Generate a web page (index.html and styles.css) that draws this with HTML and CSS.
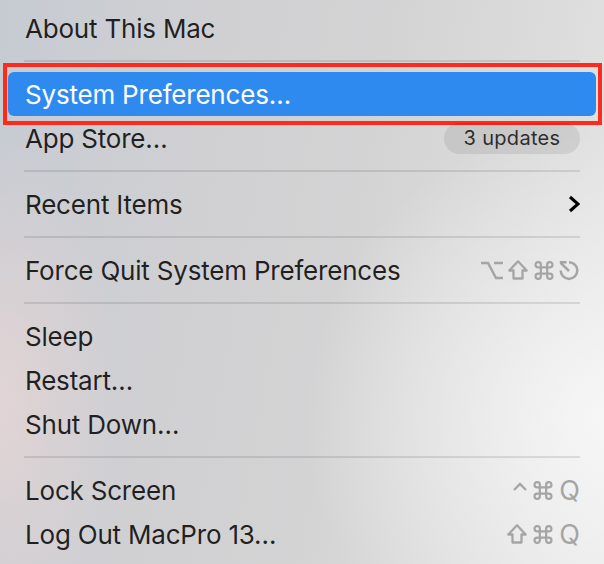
FILE: index.html
```html
<!DOCTYPE html>
<html>
<head>
<meta charset="utf-8">
<link rel="stylesheet" href="styles.css">
</head>
<body>
<div class="menu">
  <div class="item">About This Mac</div>
  <div class="sep"></div>
  <div class="item selected">System Preferences…<div class="annot"></div></div>
  <div class="item">App Store… <span class="badge">3 updates</span></div>
  <div class="sep"></div>
  <div class="item">Recent Items
    <svg class="chev" width="12" height="18" viewBox="0 0 12 18"><polyline points="2,2 10,9 2,16" fill="none" stroke="#000" stroke-width="3"/></svg>
  </div>
  <div class="sep"></div>
  <div class="item">Force Quit System Preferences
    <span class="keys">
      <svg class="k-opt" width="22" height="19" viewBox="0 0 22 19"><path d="M0 2 H7 L15 17 H22 M13 2 H22" fill="none" stroke="currentColor" stroke-width="2.5"/></svg>
      <svg class="k-shift" width="20" height="20" viewBox="0 0 20 20"><path d="M10 1.3 L1.3 10.5 H5.5 V18.5 H14.5 V10.5 H18.7 Z" fill="none" stroke="currentColor" stroke-width="2.3" stroke-linejoin="round"/></svg>
      <svg class="k-cmd" width="20" height="19" viewBox="0 0 18 18"><path d="M6 6 V3.5 A2.5 2.5 0 1 0 3.5 6 H14.5 A2.5 2.5 0 1 0 12 3.5 V14.5 A2.5 2.5 0 1 0 14.5 12 H3.5 A2.5 2.5 0 1 0 6 14.5 Z" fill="none" stroke="currentColor" stroke-width="2.1"/></svg>
      <svg class="k-esc" width="22" height="21" viewBox="0 0 22 21"><path d="M11 2.3 A8.3 8.3 0 1 1 2.7 10.6 M1.8 2.3 H8.5 M2.6 2.8 L11 11" fill="none" stroke="currentColor" stroke-width="2.5"/></svg>
    </span>
  </div>
  <div class="sep"></div>
  <div class="item">Sleep</div>
  <div class="item">Restart…</div>
  <div class="item">Shut Down…</div>
  <div class="sep"></div>
  <div class="item">Lock Screen
    <span class="keys">
      <svg class="k-ctrl" width="14" height="18" viewBox="0 0 14 18"><polyline points="1,9 7,3 13,9" fill="none" stroke="currentColor" stroke-width="2.3"/></svg>
      <svg class="k-cmd" width="20" height="19" viewBox="0 0 18 18"><path d="M6 6 V3.5 A2.5 2.5 0 1 0 3.5 6 H14.5 A2.5 2.5 0 1 0 12 3.5 V14.5 A2.5 2.5 0 1 0 14.5 12 H3.5 A2.5 2.5 0 1 0 6 14.5 Z" fill="none" stroke="currentColor" stroke-width="2.1"/></svg>
      <span class="q">Q</span>
    </span>
  </div>
  <div class="item">Log Out MacPro 13…
    <span class="keys">
      <svg class="k-shift" width="20" height="20" viewBox="0 0 20 20"><path d="M10 1.3 L1.3 10.5 H5.5 V18.5 H14.5 V10.5 H18.7 Z" fill="none" stroke="currentColor" stroke-width="2.3" stroke-linejoin="round"/></svg>
      <svg class="k-cmd" width="20" height="19" viewBox="0 0 18 18"><path d="M6 6 V3.5 A2.5 2.5 0 1 0 3.5 6 H14.5 A2.5 2.5 0 1 0 12 3.5 V14.5 A2.5 2.5 0 1 0 14.5 12 H3.5 A2.5 2.5 0 1 0 6 14.5 Z" fill="none" stroke="currentColor" stroke-width="2.1"/></svg>
      <span class="q">Q</span>
    </span>
  </div>
</div>
</body>
</html>
```
FILE: styles.css
```css
html, body {
  margin: 0;
  padding: 0;
}
body {
  width: 604px;
  height: 564px;
  overflow: hidden;
  font-family: Inter, "Liberation Sans", sans-serif;
  background:
    radial-gradient(ellipse 120px 260px at 0px 400px, rgba(232, 214, 214, 0.8), rgba(232, 214, 214, 0) 100%),
    radial-gradient(ellipse 300px 300px at 604px 420px, rgba(248, 248, 248, 0.9), rgba(248, 248, 248, 0) 100%),
    linear-gradient(100deg, #c6cbd2 0%, #d0d0d3 30%, #d3d3d4 55%, #dcdcdc 80%, #e6e6e6 100%);
}
.menu {
  padding-top: 6px;
  display: flex;
  flex-direction: column;
}
.item {
  position: relative;
  height: 44px;
  margin: 0 8px;
  padding: 0 16px 0 17px;
  display: flex;
  align-items: center;
  justify-content: space-between;
  font-size: 26px;
  letter-spacing: -0.2px;
  color: rgba(0, 0, 0, 0.85);
  border-radius: 6px;
}
.item.selected {
  background: #2f8af0;
  color: #fff;
}
.annot {
  position: absolute;
  left: -5px;
  right: -6px;
  top: -9px;
  bottom: -9px;
  border: 4px solid #ff2a1c;
}
.sep {
  height: 2px;
  margin: 10px 24px;
  background: rgba(0, 0, 0, 0.1);
}
.badge {
  height: 31px;
  width: 136px;
  box-sizing: border-box;
  border-radius: 16px;
  background: rgba(0, 0, 0, 0.08);
  font-size: 20px;
  letter-spacing: 0.3px;
  color: rgba(0, 0, 0, 0.8);
  display: flex;
  align-items: center;
  justify-content: center;
}
.chev {
  display: block;
}
.keys {
  display: flex;
  align-items: center;
  color: #a5a5a5;
}
.keys svg {
  display: block;
  flex-shrink: 0;
}
.k-shift {
  margin-left: 5px;
}
.k-cmd {
  margin-left: 6px;
}
.k-esc {
  margin-left: 4px;
}
.keys svg:first-child {
  margin-left: 0;
}
.q {
  font-size: 27px;
  line-height: 1;
  letter-spacing: 0;
  color: #a5a5a5;
  margin-left: 6px;
}
```
